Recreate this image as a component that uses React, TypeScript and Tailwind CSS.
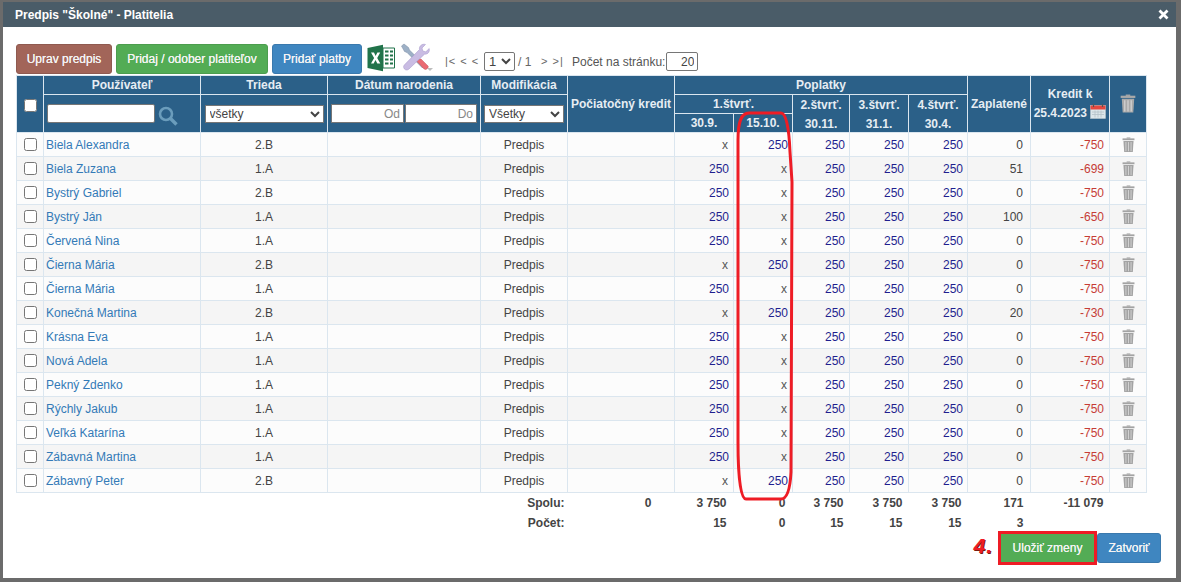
import React from "react";

const rows: [string, string, boolean, number, string][] = [
  ["Biela Alexandra", "2.B", false, 0, "-750"],
  ["Biela Zuzana", "1.A", true, 51, "-699"],
  ["Bystrý Gabriel", "2.B", true, 0, "-750"],
  ["Bystrý Ján", "1.A", true, 100, "-650"],
  ["Červená Nina", "1.A", true, 0, "-750"],
  ["Čierna Mária", "2.B", false, 0, "-750"],
  ["Čierna Mária", "1.A", true, 0, "-750"],
  ["Konečná Martina", "2.B", false, 20, "-730"],
  ["Krásna Eva", "1.A", true, 0, "-750"],
  ["Nová Adela", "1.A", true, 0, "-750"],
  ["Pekný Zdenko", "1.A", true, 0, "-750"],
  ["Rýchly Jakub", "1.A", true, 0, "-750"],
  ["Veľká Katarína", "1.A", true, 0, "-750"],
  ["Zábavná Martina", "1.A", true, 0, "-750"],
  ["Zábavný Peter", "2.B", false, 0, "-750"],
];

function Trash({ size = 13, color = "#a3a3a3" }: { size?: number; color?: string }) {
  return (
    <svg width={size} height={size * 1.2} viewBox="0 0 14 17" className="mx-auto block">
      <path d="M5 0.5h4v1.2H5z" fill={color} />
      <rect x="0.5" y="1.5" width="13" height="2" fill={color} />
      <path d="M1.5 4.3h11L11.7 16.5H2.3z" fill={color} />
      <path d="M4.2 5.5v10M7 5.5v10M9.8 5.5v10" stroke="#e2e2e2" strokeWidth="0.8" />
    </svg>
  );
}

function Excel() {
  return (
    <svg width="28" height="28" viewBox="0 0 28 28">
      <path d="M0.5 4 16 0.8v26.4L0.5 24z" fill="#21734a" />
      <path d="M16 4h11.5v20H16z" fill="#fff" stroke="#21734a" strokeWidth="1" />
      <path d="M18 7.5h3.5M23 7.5h3M18 11.5h3.5M23 11.5h3M18 15.5h3.5M23 15.5h3M18 19.5h3.5M23 19.5h3" stroke="#21734a" strokeWidth="2" />
      <path d="M4 8.5h3l1.6 3.4L10.4 8.5h2.8l-3 5.4 3.1 5.6h-3l-1.8-3.6-1.8 3.6H4l3.1-5.6z" fill="#fff" />
    </svg>
  );
}

function Tools() {
  return (
    <svg width="34" height="30" viewBox="0 0 34 30">
      <path d="M1.5 3 4 1l4.5 3.5 1 2.5L25 22.5 22.5 25 7 9.5 4.5 8.5z" fill="#9db0c6" stroke="#7a8ba3" strokeWidth="0.5" />
      <path d="M15 16.5 19.5 21 23.5 25.5Q25.5 27.5 27.5 25.5T26.5 21.5L21 16z" fill="#ea6a72" stroke="#c5545b" strokeWidth="0.5" />
      <path d="M25.5 1.5 22 5l.8 3 3 .8L29.2 5.5c.7 3-1 6-4.7 5.7L9 26c-1.4 1.4-3.4 1.3-4.6-.1s-1-3.1.3-4.3L19.5 6.5C18.8 3 22.2.3 25.5 1.5z" fill="#c9bce3" stroke="#a193c6" strokeWidth="0.5" />
      <path d="M27 25h6l-3 3z" fill="#bdbdbd" />
    </svg>
  );
}

function Calendar() {
  return (
    <svg width="16" height="16" viewBox="0 0 16 16" className="inline-block -translate-y-[3px] align-middle">
      <rect x="0.5" y="2.5" width="15" height="13" fill="#dce6ea" stroke="#b9c6cc" strokeWidth="0.6" />
      <rect x="0.5" y="2.5" width="15" height="4" fill="#e5483f" />
      <path d="M3.5 1v3M12.5 1v3" stroke="#555" strokeWidth="1.2" />
      <path d="M2 9h12M2 11.5h12M5 7.5v7M8 7.5v7M11 7.5v7" stroke="#b4c2c8" strokeWidth="0.8" />
    </svg>
  );
}

function Num({ v }: { v: boolean }) {
  return v ? (
    <td className="border border-[#dbe6ef] pr-[4px] text-right text-[#1f1f8f]">250</td>
  ) : (
    <td className="border border-[#dbe6ef] pr-[5px] text-right text-[#555]">x</td>
  );
}

const th = "border border-[#dbe6ef] bg-[#2b6088] text-center font-bold text-[#e6edf3] p-0 leading-[18px]";
const btnText = "text-[#f4f4f4] [text-shadow:0_0_0.6px_#f4f4f4]";

function Quarter({ a, b }: { a: string; b: string }) {
  return (
    <th rowSpan={2} className={th}>
      <div className="-my-[2px] translate-y-[1px] leading-[19px]">{a}<br />{b}</div>
    </th>
  );
}

export default function App() {
  return (
    <div className="h-[582px] w-[1181px] overflow-hidden bg-[#6b6b6b] pl-[3px] pr-[5px] pt-[2px] pb-[4px] font-['Liberation_Sans',Arial,sans-serif] text-[12px] text-[#444]">
      <div className="relative flex h-full flex-col bg-white">
        <div className="flex h-[25px] shrink-0 items-center justify-between bg-[#4a5c68] pl-[12px] pr-[7px] text-[12px] font-bold text-white">
          <span>Predpis "Školné" - Platitelia</span>
          <svg width="11" height="11" viewBox="0 0 11 11">
            <path d="M1.5 1.5l8 8M9.5 1.5l-8 8" stroke="#fff" strokeWidth="2.8" />
          </svg>
        </div>

        <div className="flex flex-col pl-[13px]">
          <div className="mt-[17px] flex h-[32px] items-start">
            <button className={"h-[30px] w-[96px] rounded-[3px] border border-[#8f5a50] bg-[#a26559] " + btnText}>Uprav predpis</button>
            <button className={"ml-[4px] h-[30px] w-[152px] rounded-[3px] border border-[#4c9d4e] bg-[#53ac55] " + btnText}>Pridaj / odober platiteľov</button>
            <button className={"ml-[4px] h-[30px] w-[90px] rounded-[3px] border border-[#3a79ad] bg-[#3f86c0] " + btnText}>Pridať platby</button>
            <span className="ml-[5px] block h-[28px]"><Excel /></span>
            <span className="ml-[5px] -mt-[1px] block h-[30px]"><Tools /></span>
            <div className="ml-[11px] mt-[8px] flex items-center text-[#666]">
              <span className="w-[39px] text-[11px] tracking-[1px]">|&lt; &lt; &lt;</span>
              <select className="h-[19px] w-[31px] rounded-[2px] border border-[#767676] bg-white text-[13px] text-[#444]"><option>1</option></select>
              <span className="ml-[3px] w-[23px] text-[#666]">/ 1</span>
              <span className="w-[31px] text-[11px] tracking-[1px]">&gt; &gt;|</span>
              <span className="text-[12px] text-[#555]">Počet na stránku:</span>
              <input readOnly value="20" className="ml-[1px] h-[19px] w-[32px] rounded-[2px] border border-[#767676] bg-white pr-[3px] text-right text-[12px] text-[#444]" />
            </div>
          </div>

          <table className="-mt-[1px] w-[1130px] table-fixed border-collapse">
            <colgroup>
              <col className="w-[27px]" /><col className="w-[157px]" /><col className="w-[127px]" /><col className="w-[153px]" /><col className="w-[87px]" /><col className="w-[107px]" />
              <col className="w-[59px]" /><col className="w-[59px]" /><col className="w-[57px]" /><col className="w-[59px]" /><col className="w-[59px]" /><col className="w-[63px]" /><col className="w-[79px]" /><col className="w-[37px]" />
            </colgroup>
            <thead>
              <tr className="h-[19px]">
                <th rowSpan={3} className={th}><input type="checkbox" className="m-0 mt-[2px] align-middle" /></th>
                <th className={th}>Používateľ</th>
                <th className={th}>Trieda</th>
                <th className={th}>Dátum narodenia</th>
                <th className={th}>Modifikácia</th>
                <th rowSpan={3} className={th}>Počiatočný kredit</th>
                <th colSpan={5} className={th}>Poplatky</th>
                <th rowSpan={3} className={th}>Zaplatené</th>
                <th rowSpan={3} className={th + " leading-[19px]"}>Kredit k<br />25.4.2023 <Calendar /></th>
                <th rowSpan={3} className={th}><Trash size={16} color="#a9a9a9" /></th>
              </tr>
              <tr className="h-[19px]">
                <th rowSpan={2} className={th}>
                  <div className="flex items-center pl-[3px]">
                    <input className="h-[19px] w-[108px] rounded-[2px] border border-[#767676] bg-white" />
                    <svg width="20" height="20" viewBox="0 0 20 20" className="ml-[3px] mt-[4px]">
                      <circle cx="8" cy="8" r="6" fill="none" stroke="#6b9dbc" strokeWidth="2.6" />
                      <path d="M12.5 12.5 18.5 18.5" stroke="#6b9dbc" strokeWidth="3.4" />
                    </svg>
                  </div>
                </th>
                <th rowSpan={2} className={th}>
                  <select className="h-[18px] w-[119px] border border-[#767676] bg-white text-left text-[12px] font-normal text-[#444]"><option>všetky</option></select>
                </th>
                <th rowSpan={2} className={th}>
                  <div className="flex justify-center gap-[1px]">
                    <input placeholder="Od" className="h-[19px] w-[73px] border border-[#767676] bg-white pr-[3px] text-right text-[12px] font-normal placeholder:text-[#888]" />
                    <input placeholder="Do" className="h-[19px] w-[72px] border border-[#767676] bg-white pr-[3px] text-right text-[12px] font-normal placeholder:text-[#888]" />
                  </div>
                </th>
                <th rowSpan={2} className={th}>
                  <select className="h-[18px] w-[80px] border border-[#767676] bg-white text-left text-[12px] font-normal text-[#444]"><option>Všetky</option></select>
                </th>
                <th colSpan={2} className={th}>1.štvrť.</th>
                <Quarter a="2.štvrť." b="30.11." />
                <Quarter a="3.štvrť." b="31.1." />
                <Quarter a="4.štvrť." b="30.4." />
              </tr>
              <tr className="h-[18px]">
                <th className={th}>30.9.</th>
                <th className={th}>15.10.</th>
              </tr>
            </thead>
            <tbody>
              {rows.map((r, i) => (
                <tr key={i} className={"h-[24px] " + (i % 2 ? "bg-[#f5f5f5]" : "bg-[#fcfcfc]")}>
                  <td className="border border-[#dbe6ef] p-0 text-center leading-none"><input type="checkbox" className="m-0 align-middle" /></td>
                  <td className="border border-[#dbe6ef] pl-[2px] text-[#337ab7]">{r[0]}</td>
                  <td className="border border-[#dbe6ef] text-center">{r[1]}</td>
                  <td className="border border-[#dbe6ef]"></td>
                  <td className="border border-[#dbe6ef] text-center">Predpis</td>
                  <td className="border border-[#dbe6ef]"></td>
                  <Num v={r[2]} />
                  <Num v={!r[2]} />
                  <Num v={true} />
                  <Num v={true} />
                  <Num v={true} />
                  <td className="border border-[#dbe6ef] pr-[7px] text-right">{r[3]}</td>
                  <td className="border border-[#dbe6ef] pr-[5px] text-right text-[#c63c36]">{r[4]}</td>
                  <td className="border border-[#dbe6ef] p-0 leading-none"><Trash /></td>
                </tr>
              ))}
              <tr className="h-[21px] font-bold">
                <td colSpan={4}></td>
                <td className="pr-[3px] text-right">Spolu:</td>
                <td className="pr-[23px] text-right">0</td>
                <td className="pr-[7px] text-right">3 750</td>
                <td className="pr-[7px] text-right">0</td>
                <td className="pr-[6px] text-right">3 750</td>
                <td className="pr-[6px] text-right">3 750</td>
                <td className="pr-[6px] text-right">3 750</td>
                <td className="pr-[7px] text-right">171</td>
                <td className="pr-[6px] text-right">-11 079</td>
                <td></td>
              </tr>
              <tr className="h-[18px] font-bold">
                <td colSpan={4}></td>
                <td className="pr-[3px] text-right">Počet:</td>
                <td></td>
                <td className="pr-[7px] text-right">15</td>
                <td className="pr-[7px] text-right">0</td>
                <td className="pr-[6px] text-right">15</td>
                <td className="pr-[6px] text-right">15</td>
                <td className="pr-[6px] text-right">15</td>
                <td className="pr-[7px] text-right">3</td>
                <td></td>
                <td></td>
              </tr>
            </tbody>
          </table>

          <div className="-mt-[2px] flex items-center justify-end pr-[15px]">
            <span className="mb-[5px] mr-[5px] text-[21px] font-bold italic tracking-[1px] text-[#ee1c25] [text-shadow:1px_1px_0_#7a1a10]">4.</span>
            <button className={"h-[34px] w-[99px] border-[3px] border-[#ee1c25] bg-[#53ac55] " + btnText}>Uložiť zmeny</button>
            <button className={"h-[30px] w-[64px] rounded-[3px] border border-[#3a79ad] bg-[#3f86c0] " + btnText}>Zatvoriť</button>
          </div>
        </div>

        <svg className="pointer-events-none absolute left-0 top-0" width="1173" height="576" viewBox="0 0 1173 576">
          <path d="M735 138 C735 120 738 111 746 111 L778 111 C783 111 786 125 787 150 L789 180 L788 470 C787 490 783 497 778 497 L743 497 C737 497 735 470 735 440 Z" fill="none" stroke="#ee1c25" strokeWidth="3" />
        </svg>
      </div>
    </div>
  );
}
